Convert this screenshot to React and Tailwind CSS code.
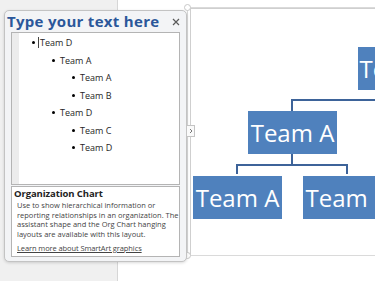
const rows = [
  { level: 0, text: "Team D", cursor: true },
  { level: 1, text: "Team A" },
  { level: 2, text: "Team A" },
  { level: 2, text: "Team B" },
  { level: 1, text: "Team D" },
  { level: 2, text: "Team C" },
  { level: 2, text: "Team D" },
];

const indent = ["pl-[13px]", "pl-[33px]", "pl-[53px]"];

function OrgBox({ className, children }) {
  return (
    <div
      className={
        "absolute w-[89px] h-[43px] bg-[#4f81bd] text-white text-[24px] leading-[43px] text-center font-['Open_Sans',sans-serif] whitespace-nowrap " +
        className
      }
    >
      {children}
    </div>
  );
}

function Line({ className }) {
  return <div className={"absolute bg-[#3d6399] " + className} />;
}

export default function App() {
  return (
    <div className="relative w-[375px] h-[281px] overflow-hidden flex font-['Open_Sans',sans-serif]">
      {/* workspace and document page */}
      <div className="w-[117px] shrink-0 bg-[#f0f0f0]" />
      <div className="flex-1 bg-white border-l border-[#d6d6d6] pt-[7px] pl-[69px]">
        {/* SmartArt frame */}
        <div className="relative w-[200px] h-[249px] border border-[#dadada] bg-white">
          <div className="absolute inset-0 left-[2px] border-l border-t border-[#cfcfcf]" />
          <div className="absolute left-[-4px] top-[-4px] w-[7px] h-[7px] rounded-full border border-[#c8c8c8] bg-white" />
          <div className="absolute left-[-4px] bottom-[-4px] w-[7px] h-[7px] rounded-full border border-[#c8c8c8] bg-white" />

          <Line className="left-[103px] top-[91px] w-[120px] h-[2px]" />
          <Line className="left-[103px] top-[92px] w-[2px] h-[11px]" />
          <Line className="left-[103px] top-[146px] w-[2px] h-[11px]" />
          <Line className="left-[48px] top-[156px] w-[112px] h-[2px]" />
          <Line className="left-[48px] top-[157px] w-[2px] h-[9px]" />
          <Line className="left-[158px] top-[157px] w-[2px] h-[9px]" />

          <OrgBox className="left-[170px] top-[39px]">Team D</OrgBox>
          <OrgBox className="left-[60px] top-[103px]">Team A</OrgBox>
          <OrgBox className="left-[5px] top-[168px]">Team A</OrgBox>
          <OrgBox className="left-[115px] top-[168px]">Team B</OrgBox>
        </div>
      </div>

      {/* Text pane */}
      <div className="absolute left-[4px] top-[10px] w-[183px] h-[252px] rounded-[5px] border border-[#c3c3c3] bg-[#f3f4f6] shadow-[0_1px_3px_rgba(0,0,0,0.15)] flex flex-col px-[6px]">
        <div className="-mx-[4px] h-[21px] flex items-center justify-between pr-[4px]">
          <span className="text-[15px] font-bold text-[#2b579a] leading-none tracking-[0.3px]">Type your text here</span>
          <svg width="8" height="8" viewBox="0 0 8 8">
            <path d="M1 1 L7 7 M7 1 L1 7" stroke="#5a5a5a" strokeWidth="1.2" />
          </svg>
        </div>

        <div className="h-[153px] border border-[#b4b4b4] bg-white flex">
          <div className="w-[7px] bg-[#ececec]" />
          <div className="flex-1 pt-[1px]">
            {rows.map((r, i) => (
              <div key={i} className={"flex items-center h-[17.5px] text-[9px] text-[#262626] " + indent[r.level]}>
                <span className="w-[3px] h-[3px] rounded-full bg-black" />
                {r.cursor ? <span className="ml-[3px] w-px h-[11px] bg-[#444]" /> : null}
                <span className={r.cursor ? "ml-px" : "ml-[5px]"}>{r.text}</span>
              </div>
            ))}
          </div>
        </div>

        <div className="mt-px h-[71px] border border-[#b4b4b4] bg-white pt-[2px] pl-[2px]">
          <div className="text-[9.5px] font-bold leading-[10px] text-[#222] tracking-[-0.1px]">Organization Chart</div>
          <div className="mt-[2px] pl-[3px] text-[7.5px] leading-[9.5px] text-[#444] whitespace-nowrap">
            <div>Use to show hierarchical information or</div>
            <div>reporting relationships in an organization. The</div>
            <div>assistant shape and the Org Chart hanging</div>
            <div>layouts are available with this layout.</div>
          </div>
          <div className="mt-[5px] pl-[3px] text-[7.5px] leading-[9.5px] text-[#444] tracking-[-0.1px] underline">
            Learn more about SmartArt graphics
          </div>
        </div>
      </div>

      {/* pane expander tab */}
      <div className="absolute left-[186px] top-[125px] w-[9px] h-[12px] border border-[#c4c4c4] bg-[#fafafa] flex items-center justify-center">
        <svg width="4" height="6" viewBox="0 0 4 6">
          <path d="M1 1 L3 3 L1 5" stroke="#777" strokeWidth="1" fill="none" />
        </svg>
      </div>
    </div>
  );
}
